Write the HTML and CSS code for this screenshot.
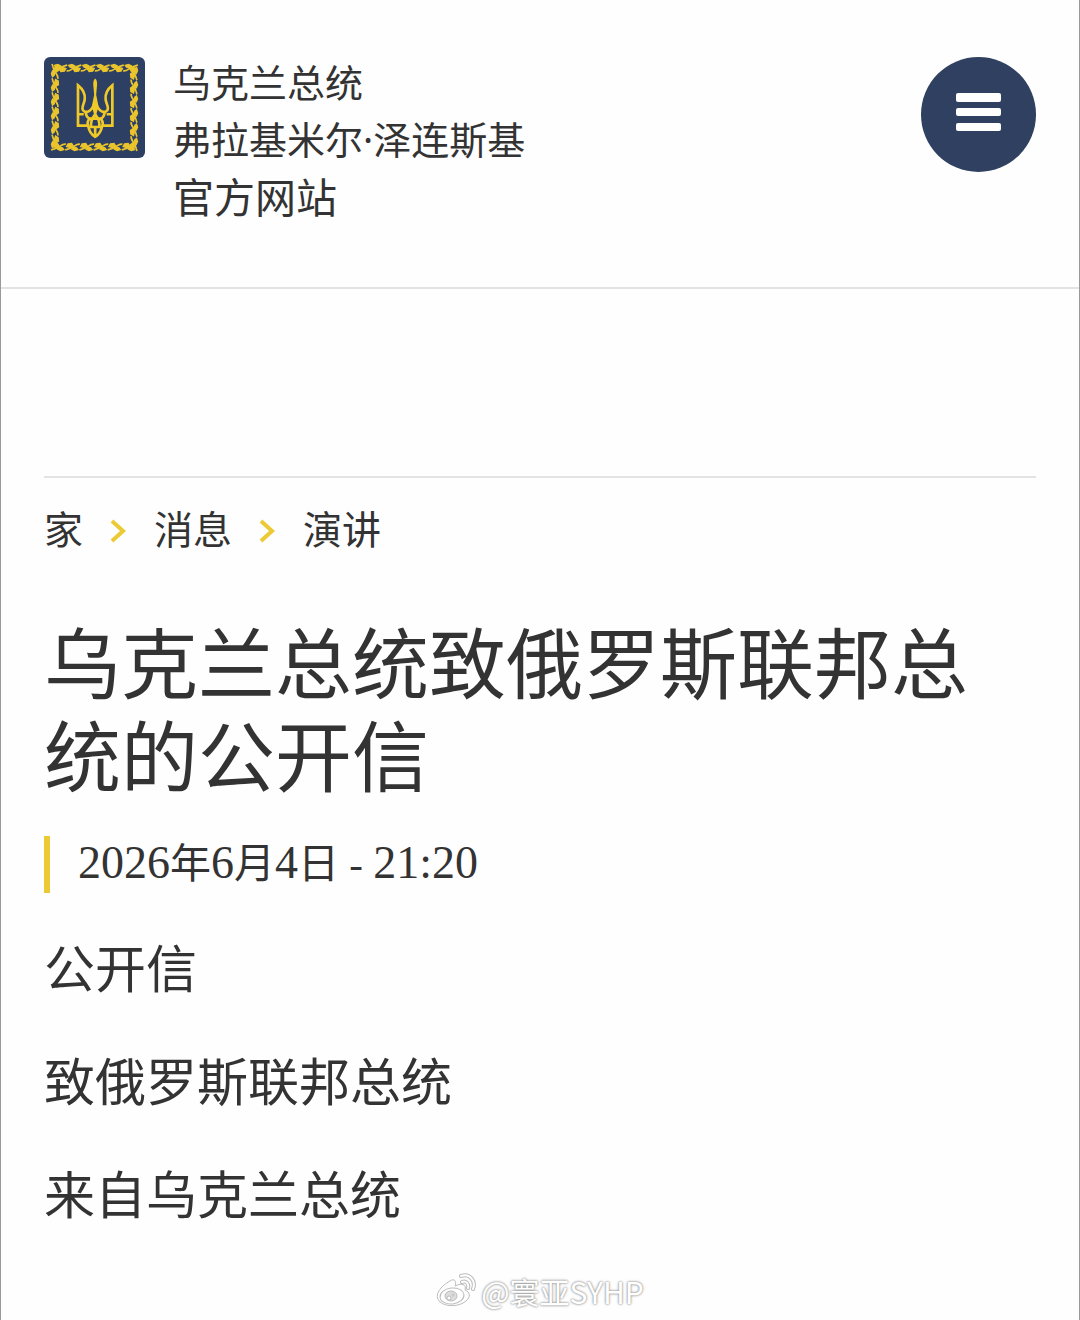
FILE: index.html
```html
<!DOCTYPE html>
<html lang="zh-CN">
<head>
<meta charset="utf-8">
<meta name="viewport" content="width=device-width, initial-scale=1">
<title>乌克兰总统致俄罗斯联邦总统的公开信</title>
<link rel="stylesheet" href="styles.css">
</head>
<body>
<header class="header">
  <a class="brand" href="#">
    <svg class="logo" viewBox="0 0 300 300" aria-hidden="true">
      <defs>
        <g id="leaf">
          <path d="M0 20C8 22 13 17 20 12S35 6 44 3" fill="none" stroke="#e9c42d" stroke-width="5"/>
          <path d="M3 3L16 -1 27 4 21 14 9 11ZM17 14L29 8 43 12 37 23 24 24Z" fill="#e9c42d"/>
        </g>
        <g id="side">
          <use href="#leaf" x="25" y="21"/><use href="#leaf" x="67" y="21"/><use href="#leaf" x="109" y="21"/><use href="#leaf" x="151" y="21"/><use href="#leaf" x="193" y="21"/><use href="#leaf" x="235" y="21"/>
        </g>
      </defs>
      <rect width="300" height="300" rx="18" fill="#2d3f63"/>
      <use href="#side"/>
      <use href="#side" transform="rotate(90 150 150)"/>
      <use href="#side" transform="rotate(180 150 150)"/>
      <use href="#side" transform="rotate(270 150 150)"/>
      <g fill="none" stroke="#efc928" stroke-width="8">
        <path d="M131 204H101V84C116 96 123 110 121 126C119 141 110 149 116 158C124 169 141 162 149 140M173 204H203V84C188 96 181 110 183 126C185 141 194 149 188 158C180 169 163 162 155 140"/>
        <path d="M101 170H118M186 170H203M124 166C126 178 132 182 137 183H167C172 182 178 178 180 166M137 183C129 188 128 199 131 204C134 219 141 231 152 237C163 231 170 219 173 204C176 199 175 188 167 183M152 170C143 181 138 195 140 208H164C166 195 161 181 152 170M152 208V237"/>
      </g>
      <path d="M152 64C157 68 159 76 157 90L155 112 162 147 152 182 142 147 149 112 147 90C145 76 147 68 152 64Z" fill="#efc928"/>
    </svg>
    <span class="brand-text">
      <span>乌克兰总统</span>
      <span>弗拉基米尔<span class="dot">·</span>泽连斯基</span>
      <span class="brand-site">官方网站</span>
    </span>
  </a>
  <button class="menu" type="button" aria-label="菜单">
    <svg viewBox="0 0 115 115" aria-hidden="true" fill="#fff">
      <rect x="35" y="36" width="45" height="9" rx="2"/>
      <rect x="35" y="51" width="45" height="8" rx="2"/>
      <rect x="35" y="66" width="45" height="8" rx="2"/>
    </svg>
  </button>
</header>
<main class="main">
  <nav class="crumbs" aria-label="导航路径">
    <a href="#">家</a>
    <svg class="chevron" viewBox="0 0 17 26" aria-hidden="true"><path d="M2 3L13 13L2 23"/></svg>
    <a href="#">消息</a>
    <svg class="chevron" viewBox="0 0 17 26" aria-hidden="true"><path d="M2 3L13 13L2 23"/></svg>
    <a href="#">演讲</a>
  </nav>
  <article class="article">
    <h1 class="title">乌克兰总统致俄罗斯联邦总统的公开信</h1>
    <time class="date" datetime="2026-06-04T21:20"><span class="num">2026</span>年<span class="num">6</span>月<span class="num">4</span>日 - <span class="num">21:20</span></time>
    <p>公开信</p>
    <p>致俄罗斯联邦总统</p>
    <p>来自乌克兰总统</p>
  </article>
</main>
<footer class="credit">
  <svg class="weibo" viewBox="0 0 40 36" aria-hidden="true">
    <g fill="#fff" stroke="#bbb" stroke-width="1">
      <path d="M14 8C18 5 21 8 19 13C25 10 31 11 29 17C34 19 35 24 30 28C23 34 10 34 4 29C-3 22 5 13 14 8Z"/>
      <ellipse cx="16" cy="23" rx="12" ry="8" transform="rotate(-7 16 23)"/>
      <ellipse cx="15" cy="23" rx="6" ry="5" fill="#ddd"/>
      <circle cx="13" cy="25" r="2"/><circle cx="17" cy="22" r="1"/>
    </g>
    <g fill="none" stroke-linecap="round">
      <path d="M25 3C34 0 40 8 37 16M26 9C30 7 33 11 32 15" stroke="#bbb" stroke-width="4"/>
      <path d="M25 3C34 0 40 8 37 16M26 9C30 7 33 11 32 15" stroke="#fff" stroke-width="2"/>
    </g>
  </svg>
  <span>@寰亚SYHP</span>
</footer>
</body>
</html>
```
FILE: styles.css
```css
* {
  box-sizing: border-box;
}

body {
  display: flex;
  flex-direction: column;
  min-height: 100vh;
  margin: 0;
  border: solid #999;
  border-width: 0 1px;
  background: #fefefe;
  color: #333;
  font-family: "Noto Sans CJK SC", sans-serif;
  font-size: 39px;
}

a {
  color: inherit;
  text-decoration: none;
}

.header {
  display: flex;
  align-items: flex-start;
  justify-content: space-between;
  padding: 57px 43px 68px;
  border-bottom: 2px solid #e3e3e3;
}

.brand {
  display: flex;
  align-items: flex-start;
  gap: 28px;
}

.logo {
  flex: none;
  width: 101px;
  height: 101px;
}

.brand-text {
  display: flex;
  flex-direction: column;
  gap: 9px;
  font-size: 38px;
  line-height: 48px;
}

.brand-site {
  font-size: 41px;
}

.dot {
  font-family: "Noto Sans", sans-serif;
  line-height: 1;
}

.menu {
  flex: none;
  width: 115px;
  height: 115px;
  padding: 0;
  border: 0;
  border-radius: 50%;
  background: #2f4060;
  cursor: pointer;
}

.menu svg {
  display: block;
}

.main {
  padding: 187px 43px 0;
}

.crumbs {
  display: flex;
  align-items: center;
  gap: 27px;
  padding-top: 21px;
  border-top: 2px solid #e3e3e3;
  line-height: 57px;
}

.chevron {
  width: 17px;
  height: 26px;
  margin-top: 6px;
  fill: none;
  stroke: #ecca35;
  stroke-width: 4px;
}

.article {
  padding-top: 57px;
  font-size: 51px;
  line-height: 79px;
}

.title {
  margin: 0;
  font-size: 77px;
  font-weight: 400;
  line-height: 93px;
}

.date {
  display: block;
  margin-top: 37px;
  padding-left: 28px;
  border-left: 6px solid #ecca35;
  font-family: "Liberation Serif", "Noto Sans CJK SC", serif;
  font-size: 41px;
  line-height: 57px;
}

.num {
  font-size: 46px;
  line-height: 1;
}

.article p {
  margin: 34px 0 0;
}

.credit {
  display: flex;
  align-items: center;
  justify-content: center;
  gap: 5px;
  margin-top: auto;
  padding-bottom: 8px;
  color: #fff;
  font-size: 30px;
  line-height: 42px;
  text-shadow: 0 0 2px #888, 0 0 3px #aaa;
}

.weibo {
  width: 40px;
  height: 36px;
}
```
